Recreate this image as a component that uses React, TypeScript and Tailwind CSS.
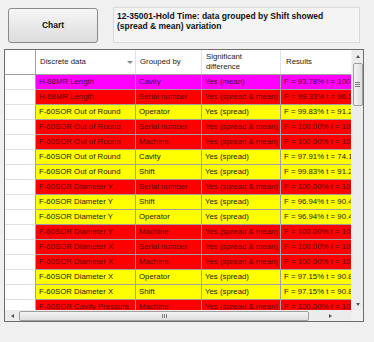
import React from 'react';

type Row = { item: string; group: string; diff: string; result: string; tone: 'm' | 'r' | 'y' };

const rows: Row[] = [
  { item: 'H-68MR Length', group: 'Cavity', diff: 'Yes (mean)', result: 'F = 93.78%  t = 100.00%', tone: 'm' },
  { item: 'H-68MR Length', group: 'Serial number', diff: 'Yes (spread & mean)', result: 'F = 99.33%  t = 96.50%', tone: 'r' },
  { item: 'F-60SOR Out of Round', group: 'Operator', diff: 'Yes (spread)', result: 'F = 99.83%  t = 91.20%', tone: 'y' },
  { item: 'F-60SOR Out of Round', group: 'Serial number', diff: 'Yes (spread & mean)', result: 'F = 100.00%  t = 100.00%', tone: 'r' },
  { item: 'F-60SOR Out of Round', group: 'Machine', diff: 'Yes (spread & mean)', result: 'F = 100.00%  t = 100.00%', tone: 'r' },
  { item: 'F-60SOR Out of Round', group: 'Cavity', diff: 'Yes (spread)', result: 'F = 97.91%  t = 74.10%', tone: 'y' },
  { item: 'F-60SOR Out of Round', group: 'Shift', diff: 'Yes (spread)', result: 'F = 99.83%  t = 91.20%', tone: 'y' },
  { item: 'F-60SOR Diameter Y', group: 'Serial number', diff: 'Yes (spread & mean)', result: 'F = 100.00%  t = 100.00%', tone: 'r' },
  { item: 'F-60SOR Diameter Y', group: 'Shift', diff: 'Yes (spread)', result: 'F = 96.94%  t = 90.40%', tone: 'y' },
  { item: 'F-60SOR Diameter Y', group: 'Operator', diff: 'Yes (spread)', result: 'F = 96.94%  t = 90.40%', tone: 'y' },
  { item: 'F-60SOR Diameter Y', group: 'Machine', diff: 'Yes (spread & mean)', result: 'F = 100.00%  t = 100.00%', tone: 'r' },
  { item: 'F-60SOR Diameter X', group: 'Serial number', diff: 'Yes (spread & mean)', result: 'F = 100.00%  t = 100.00%', tone: 'r' },
  { item: 'F-60SOR Diameter X', group: 'Machine', diff: 'Yes (spread & mean)', result: 'F = 100.00%  t = 100.00%', tone: 'r' },
  { item: 'F-60SOR Diameter X', group: 'Operator', diff: 'Yes (spread)', result: 'F = 97.15%  t = 90.80%', tone: 'y' },
  { item: 'F-60SOR Diameter X', group: 'Shift', diff: 'Yes (spread)', result: 'F = 97.15%  t = 90.80%', tone: 'y' },
  { item: 'F-60SOR Cavity Pressure', group: 'Machine', diff: 'Yes (spread & mean)', result: 'F = 100.00%  t = 100.00%', tone: 'r' },
];

const toneClass = {
  m: 'bg-[#ff00ff] text-[#4a0030]',
  r: 'bg-[#ff0000] text-[#5e0000]',
  y: 'bg-[#ffff00] text-[#1a1a00]',
};

const cols = 'grid grid-cols-[31px_100px_66px_79px_120px]';

export default function App() {
  return (
    <div className="w-[374px] h-[342px] bg-[#f0f0f0] overflow-hidden font-['Liberation_Sans',Arial,sans-serif]">
      <div className="flex items-start pl-[8px] pt-[7px]">
        <button className="mt-[1px] w-[90px] h-[35px] rounded-[3px] border border-[#8a8a8a] bg-gradient-to-b from-[#f6f6f6] to-[#dcdcdc] text-[8.5px] font-bold text-[#111] flex items-center justify-center">
          Chart
        </button>
        <div className="ml-[15px] w-[247px] h-[36px] border border-[#d9d9d9] bg-[#f4f4f4] pl-[3px] pr-[24px] pt-[3px] text-[8.5px] font-bold leading-[10px] text-[#111]">
          12-35001-Hold Time: data grouped by Shift showed (spread &amp; mean) variation
        </div>
      </div>

      <div className="ml-[4px] mt-[6px] w-[360px] h-[273px] border border-[#6d6d6d] bg-white flex flex-col">
        <div className="flex flex-1 overflow-hidden">
          <div className="flex-1 overflow-hidden text-[7.8px]">
            {/* header */}
            <div className={`${cols} h-[25px] border-b border-[#a0a0a0] text-[#222]`}>
              <div className="border-r border-[#a0a0a0]" />
              <div className="relative flex items-center pl-[4px] border-r border-[#e2e2e2]">
                Discrete data
                <span className="absolute left-[91px] top-[11px] w-0 h-0 border-l-[3px] border-r-[3px] border-t-[3px] border-l-transparent border-r-transparent border-t-[#8a8a8a]" />
              </div>
              <div className="flex items-center pl-[4px] border-r border-[#e2e2e2]">Grouped by</div>
              <div className="flex items-center pl-[4px] leading-[10px] border-r border-[#e2e2e2]">
                Significant
                <br />
                difference
              </div>
              <div className="flex items-center pl-[5px]">Results</div>
            </div>
            {rows.map((r, i) => (
              <div key={i} className={`${cols} h-[15px]`}>
                <div className="bg-white border-r border-b border-r-[#a0a0a0] border-b-[#e0e0e0]" />
                {[r.item, r.group, r.diff, r.result].map((t, j) => (
                  <div
                    key={j}
                    className={`${toneClass[r.tone]} border-r border-b border-[#a0a0a0] pl-[3px] flex items-center whitespace-nowrap overflow-hidden`}
                  >
                    {t}
                  </div>
                ))}
              </div>
            ))}
          </div>
          {/* vertical scrollbar */}
          <div className="w-[12px] bg-[#ececec] flex flex-col items-center border-l border-[#f4f4f4]">
            <div className="h-[13px] flex items-center justify-center">
              <span className="w-0 h-0 border-l-[2.5px] border-r-[2.5px] border-b-[3px] border-l-transparent border-r-transparent border-b-[#555]" />
            </div>
            <div className="w-[10px] h-[43px] rounded-[2px] border border-[#9f9f9f] bg-gradient-to-r from-[#f4f4f4] to-[#dedede] flex flex-col items-center justify-center gap-[1px]">
              <span className="w-[5px] h-px bg-[#7a7a7a]" />
              <span className="w-[5px] h-px bg-[#7a7a7a]" />
              <span className="w-[5px] h-px bg-[#7a7a7a]" />
            </div>
            <div className="flex-1" />
            <div className="h-[12px] flex items-center justify-center">
              <span className="w-0 h-0 border-l-[2.5px] border-r-[2.5px] border-t-[3px] border-l-transparent border-r-transparent border-t-[#555]" />
            </div>
          </div>
        </div>
        {/* horizontal scrollbar */}
        <div className="h-[11px] flex bg-[#ececec]">
          <div className="flex-1 flex items-center">
            <div className="w-[14px] flex items-center justify-center">
              <span className="w-0 h-0 border-t-[2.5px] border-b-[2.5px] border-r-[3px] border-t-transparent border-b-transparent border-r-[#555]" />
            </div>
            <div className="w-[290px] h-[10px] rounded-[2px] border border-[#9f9f9f] bg-gradient-to-b from-[#f4f4f4] to-[#dedede] flex items-center justify-center gap-[1px]">
              <span className="w-px h-[4px] bg-[#7a7a7a]" />
              <span className="w-px h-[4px] bg-[#7a7a7a]" />
              <span className="w-px h-[4px] bg-[#7a7a7a]" />
            </div>
            <div className="flex-1 flex items-center justify-center">
              <span className="w-0 h-0 border-t-[2.5px] border-b-[2.5px] border-l-[3px] border-t-transparent border-b-transparent border-l-[#555]" />
            </div>
          </div>
          <div className="w-[12px] bg-[#f0f0f0]" />
        </div>
      </div>
    </div>
  );
}
